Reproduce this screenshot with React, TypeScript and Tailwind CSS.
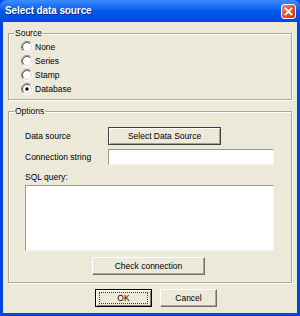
import React from "react";

function Radio({ checked }: { checked?: boolean }) {
  return (
    <svg width="12" height="12" viewBox="0 0 12 12" className="shrink-0">
      <circle cx="6" cy="6" r="5.5" fill="#ffffff" />
      <path d="M2.1 9.9 A5.5 5.5 0 0 1 9.9 2.1" fill="none" stroke="#8a8a80" strokeWidth="1" />
      <path d="M2.8 9.2 A4.5 4.5 0 0 1 9.2 2.8" fill="none" stroke="#555550" strokeWidth="1" />
      <path d="M9.9 2.1 A5.5 5.5 0 0 1 2.1 9.9" fill="none" stroke="#ffffff" strokeWidth="1" />
      <path d="M9.2 2.8 A4.5 4.5 0 0 1 2.8 9.2" fill="none" stroke="#d8d5c8" strokeWidth="1" />
      {checked && <circle cx="6" cy="6" r="1.7" fill="#000000" />}
    </svg>
  );
}

function RadioRow({ label, checked }: { label: string; checked?: boolean }) {
  return (
    <div className="flex h-[14px] items-center gap-[2px] pl-[12px]">
      <Radio checked={checked} />
      <span>{label}</span>
    </div>
  );
}

export default function App() {
  return (
    <div
      className="flex h-[316px] w-[300px] flex-col bg-[#0047e0] text-[8.5px] leading-[10px] text-black"
      style={{ fontFamily: '"Liberation Sans", Arial, sans-serif' }}
    >
      {/* Title bar */}
      <div className="flex h-[22px] shrink-0 items-center justify-between rounded-t-[6px] bg-gradient-to-b from-[#3d8dff] via-[#0058ee] to-[#0048dd] pl-[5px] pr-[4px]">
        <span className="text-[10px] font-bold tracking-[-0.1px] text-white [text-shadow:1px_1px_0_#0a2a8a]">
          Select data source
        </span>
        <div className="flex h-[15px] w-[15px] items-center justify-center rounded-[3px] border border-white bg-gradient-to-br from-[#f08a6a] via-[#e0522e] to-[#c23a18]">
          <svg width="9" height="9" viewBox="0 0 9 9">
            <path d="M1.5 1.5 L7.5 7.5 M7.5 1.5 L1.5 7.5" stroke="#ffffff" strokeWidth="1.8" strokeLinecap="square" />
          </svg>
        </div>
      </div>

      {/* Client */}
      <div className="mx-[3px] mb-[3px] flex flex-1 flex-col bg-[#ece9d8] px-[5px] pt-[6px]">
        <fieldset className="w-[284px] border border-[#aca899] px-[0px] pb-[3px] pt-[2px] shadow-[inset_1px_1px_0_#ffffff,1px_1px_0_#ffffff]">
          <legend className="ml-[5px] px-[1px]">Source</legend>
          <RadioRow label="None" />
          <RadioRow label="Series" />
          <RadioRow label="Stamp" />
          <RadioRow label="Database" checked />
        </fieldset>

        <fieldset className="mt-[6px] w-[284px] border border-[#aca899] pb-[7px] pl-[16px] pr-[17px] pt-[11px] shadow-[inset_1px_1px_0_#ffffff,1px_1px_0_#ffffff]">
          <legend className="-ml-[11px] px-[1px]">Options</legend>
          <div className="flex h-[18px] items-center">
            <span className="w-[83px]">Data source</span>
            <button className="h-[18px] w-[113px] border border-[#404040] bg-[#ece9d8] shadow-[inset_1px_1px_0_#ffffff,inset_-1px_-1px_0_#a0a0a0]">
              Select Data Source
            </button>
          </div>
          <div className="mt-[4px] flex h-[16px] items-center">
            <span className="w-[83px]">Connection string</span>
            <div className="h-[16px] w-[166px] border-l border-t border-b border-r border-l-[#9d9a8c] border-t-[#9d9a8c] border-r-[#f4f2e8] border-b-[#f4f2e8] bg-white" />
          </div>
          <div className="mt-[7px] h-[10px]">SQL query:</div>
          <div className="mt-[3px] h-[66px] w-[249px] border border-l-[#9d9a8c] border-t-[#9d9a8c] border-r-[#f4f2e8] border-b-[#f4f2e8] bg-white" />
          <div className="mt-[6px] flex justify-center pr-[2px]">
            <button className="h-[18px] w-[113px] border border-l-[#ffffff] border-t-[#ffffff] border-r-[#716f64] border-b-[#716f64] bg-[#ece9d8] shadow-[inset_-1px_-1px_0_#aca899]">
              Check connection
            </button>
          </div>
        </fieldset>

        <div className="mt-[6px] flex gap-[8px] pl-[87px]">
          <button className="flex h-[18px] w-[57px] items-center justify-center border border-black bg-[#ece9d8] shadow-[inset_1px_1px_0_#ffffff,inset_-1px_-1px_0_#808080]">
            <span className="flex h-[12px] w-[49px] items-center justify-center border border-dotted border-[#404040]">
              OK
            </span>
          </button>
          <button className="h-[18px] w-[57px] border border-l-[#ffffff] border-t-[#ffffff] border-r-[#716f64] border-b-[#716f64] bg-[#ece9d8] shadow-[inset_-1px_-1px_0_#aca899]">
            Cancel
          </button>
        </div>
      </div>
    </div>
  );
}
